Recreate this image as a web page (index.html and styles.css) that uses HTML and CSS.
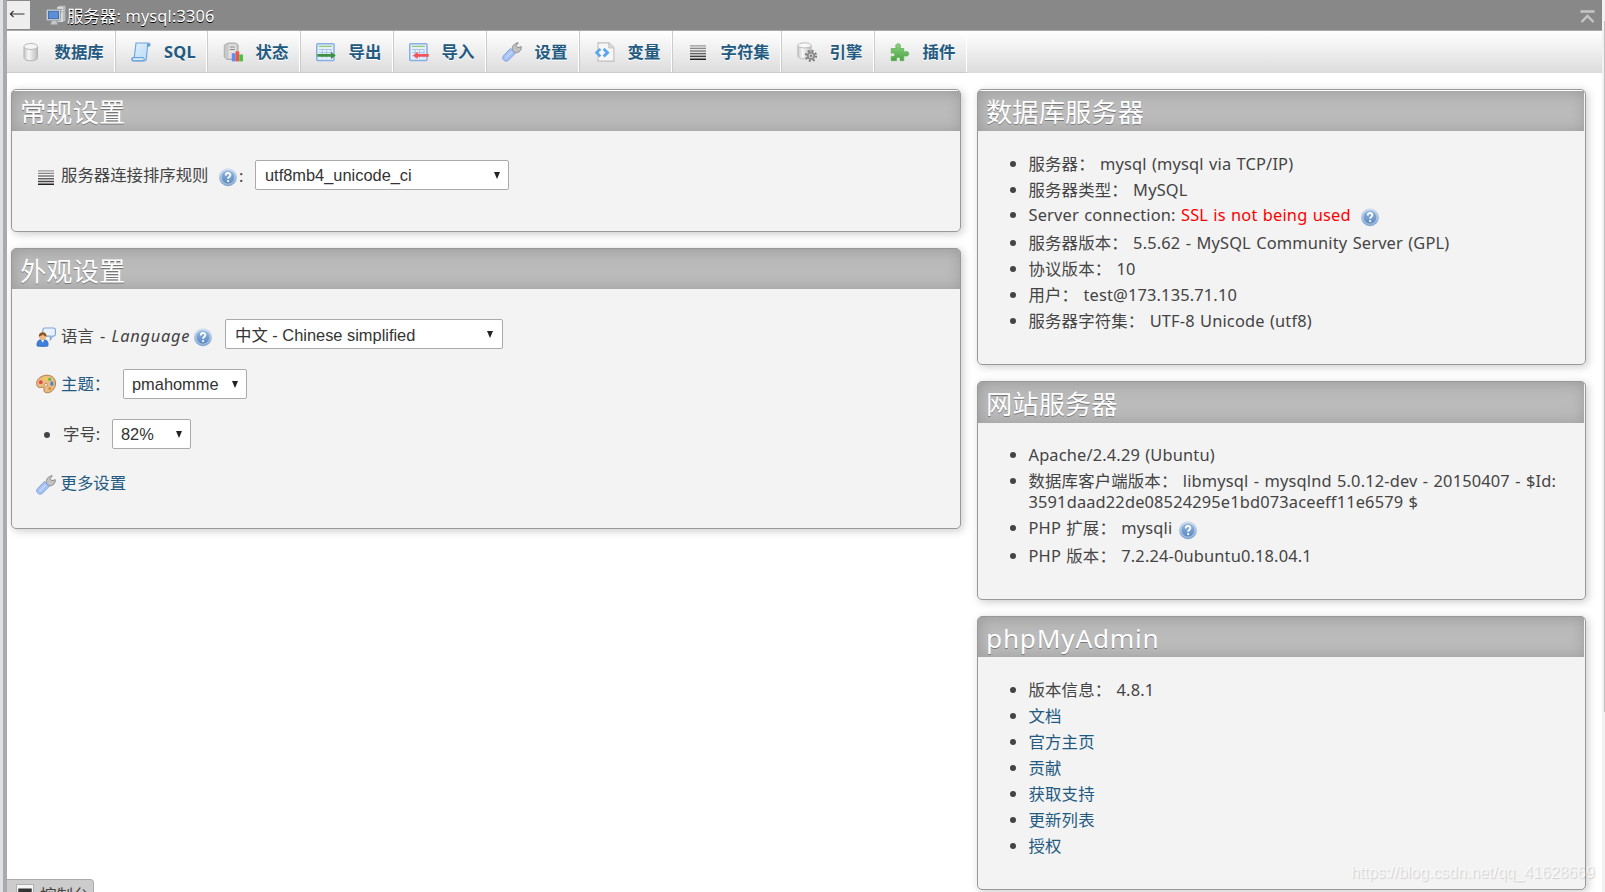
FILE: index.html
```
<!DOCTYPE html>
<html lang="zh-CN">
<head>
    <meta charset="UTF-8">
    <title>mysql:3306 | phpMyAdmin</title>
    <link rel="stylesheet" href="styles.css">
</head>
<body>

<svg class="defs" aria-hidden="true">
    <defs>
        <linearGradient id="g-cyl"><stop offset="0" stop-color="#c9c9c9"/><stop offset=".35" stop-color="#f6f6f6"/><stop offset="1" stop-color="#bdbdbd"/></linearGradient>
        <linearGradient id="g-blue" x1="0" y1="0" x2="1" y2="1"><stop offset="0" stop-color="#e4f2fd"/><stop offset="1" stop-color="#b4d8f8"/></linearGradient>
        <linearGradient id="g-help" x1="0" y1="0" x2="0" y2="1"><stop offset="0" stop-color="#8fb5e0"/><stop offset="1" stop-color="#5b88bf"/></linearGradient>
        <linearGradient id="g-ring" x1="0" y1="0" x2="0" y2="1"><stop offset="0" stop-color="#d3e0f0"/><stop offset="1" stop-color="#7fa3d0"/></linearGradient>
        <linearGradient id="g-green" x1="0" y1="0" x2="0" y2="1"><stop offset="0" stop-color="#8fd182"/><stop offset="1" stop-color="#4ba545"/></linearGradient>
        <symbol id="i-server" viewBox="0 0 16 16">
            <path d="M9 1.5l2-1h4.5v12l-2 1H9z" fill="#b9bcbc"/>
            <path d="M9 1.5h4.5v12H9z" fill="#d8dada"/>
            <path d="M10 3.5h3M10 5.5h3" stroke="#999" stroke-width=".8"/>
            <rect x=".5" y="3.5" width="11" height="9" rx="1" fill="#d3d6d8" stroke="#9aa0a4" stroke-width=".8"/>
            <rect x="2" y="5" width="8" height="6" fill="#5b8ed6" stroke="#39659f" stroke-width=".7"/>
            <path d="M5 12.5h3l1.5 3h-6z" fill="#c4c6c7"/>
        </symbol>
        <symbol id="i-db" viewBox="0 0 16 16">
            <path d="M1.6 3.6v8.8c0 1.7 2.4 2.6 5.4 2.6s5.4-.9 5.4-2.6V3.6" fill="url(#g-cyl)" stroke="#b3b3b3" stroke-width=".8"/>
            <ellipse cx="7" cy="3.6" rx="5.4" ry="2.4" fill="#f5f5f5" stroke="#b9b9b9" stroke-width=".8"/>
        </symbol>
        <symbol id="i-sql" viewBox="0 0 16 16">
            <path d="M4 .8h10.200c1.300 0 1.500 2.300.2 2.600h-1.200L12.300 13.500c-.2 1.200-.8 1.700-1.700 1.700H1.500c-1.200 0-1.200-2.700.2-2.700h.9L4 .8z" fill="url(#g-blue)" stroke="#6ba5da" stroke-width=".9"/>
            <path d="M2 12.500h8c.8 0 .5 2.200 0 2.500H1.500c-1-.3-.7-2.500.5-2.500z" fill="#d5eafb" stroke="#5c98d0" stroke-width=".8"/>
            <path d="M12.800 1.200l1.600.2.600 1.500-2 .4z" fill="#4d95dc"/>
        </symbol>
        <symbol id="i-status" viewBox="0 0 16 16">
            <path d="M1 2.500L4 .8h6l2 1.400v10L9.500 14H3L1 12z" fill="#c9c9c9" stroke="#a5a5a5" stroke-width=".7"/>
            <path d="M4.500 2h6v11h-6z" fill="#e2e2e2"/>
            <path d="M5.500 4h4M5.500 6h4" stroke="#888" stroke-width=".9"/>
            <path d="M7 9h3v6.500H7z" fill="#5b90ec"/>
            <path d="M10 7.500h3v8h-3z" fill="#f0554c"/>
            <path d="M13 10h3v5.500h-3z" fill="#45c447"/>
        </symbol>
        <symbol id="i-table" viewBox="0 0 16 16">
            <rect x=".6" y="1.400" width="13.800" height="13.400" rx=".8" fill="#e6f0fa" stroke="#86aee0" stroke-width="1.200"/>
            <path d="M2.200 3.500h10.500" stroke="#8fc974" stroke-width="1"/>
            <path d="M2.500 6h10M2.500 8.500h10M2.500 11h10M5 6v7M8.500 6v7M12 6v7" stroke="#a9c4e4" stroke-width=".8"/>
        </symbol>
        <symbol id="i-export" viewBox="0 0 16 16">
            <use href="#i-table"/>
            <path d="M1 9.500h11V7.800l3.800 2.900-3.800 2.900v-1.800H1z" fill="#3d9140"/>
        </symbol>
        <symbol id="i-import" viewBox="0 0 16 16">
            <use href="#i-table"/>
            <path d="M15.800 9.500H7V7.800l-3.800 2.900L7 13.600v-1.800h8.800z" fill="#f4535a"/>
        </symbol>
        <symbol id="i-wrench" viewBox="0 0 16 16">
            <path d="M8.200 6.500C7.800 3.500 9.800.8 13 .6L11.300 3l1.300 1.600 2.800-.9c.3 3-2 5.200-4.800 4.900L9.700 8z" fill="#c2c2c2" stroke="#8b8b8b" stroke-width=".8"/>
            <path d="M6.700 5.200l3.900 3.900-5.600 5.600C2.600 16.800-.9 13.300 1.200 10.900z" fill="#a6c2f3" stroke="#7d9ce0" stroke-width=".7"/>
            <path d="M3 12.800l5-5" stroke="#c4d7fa" stroke-width="1"/>
        </symbol>
        <symbol id="i-vars" viewBox="0 0 16 16">
            <path d="M2.400.7h8.800l3.900 3.800v10.800H2.400z" fill="#f6f6f6" stroke="#bfbfbf" stroke-width=".9"/>
            <path d="M11 .7v4h4" fill="#ddd" stroke="#bfbfbf" stroke-width=".7"/>
            <path d="M4.300 5.500L1.200 8.500l3.100 3M6.900 5.500l3.200 3-3.200 3" fill="none" stroke="#5aa5ee" stroke-width="2.200"/>
        </symbol>
        <symbol id="i-charset" viewBox="0 0 16 16">
            <path d="M1.600 3.100h12.800" stroke="#999"/>
            <path d="M1.600 5.100h12.800" stroke="#888" stroke-width="1.100"/>
            <path d="M1.600 7.200h12.800" stroke="#777" stroke-width="1.100"/>
            <path d="M1.600 9.300h12.800" stroke="#666" stroke-width="1.200"/>
            <path d="M1.600 11.500h12.800" stroke="#444" stroke-width="1.200"/>
            <path d="M1.600 13.800h12.800" stroke="#222" stroke-width="1.200"/>
        </symbol>
        <symbol id="i-engine" viewBox="0 0 16 16">
            <path d="M.7 2.700v8.500c0 1.500 2.200 2.300 5.300 2.300s5.300-.8 5.300-2.300V2.700" fill="url(#g-cyl)" stroke="#b5b5b5" stroke-width=".7"/>
            <ellipse cx="6" cy="2.700" rx="5.300" ry="2" fill="#f8f8f8" stroke="#b5b5b5" stroke-width=".7"/>
            <circle cx="11.200" cy="11" r="4.100" fill="none" stroke="#777" stroke-width="1.500" stroke-dasharray="1.600 1.620"/>
            <circle cx="11.200" cy="11" r="2.600" fill="#ddd" stroke="#8b8b8b" stroke-width="1.500"/>
            <circle cx="11.200" cy="11" r="1" fill="#777"/>
        </symbol>
        <symbol id="i-plugin" viewBox="0 0 16 16">
            <path d="M1 5.200h4.200c-1.200-1.800-.6-3.900 1.300-3.900s2.500 2.100 1.300 3.900H11v3c2-1.200 4-.6 4 1.200s-2 2.500-4 1.300v4.200H8c.6-2-.2-2.800-1.300-2.800s-2 .8-1.400 2.800H1v-3.500c2 .5 2.900-.2 2.900-1.300S3 8.300 1 9z" fill="url(#g-green)" stroke="#5bb053" stroke-width=".6"/>
        </symbol>
        <symbol id="i-help" viewBox="0 0 16 16">
            <circle cx="8" cy="8.200" r="7.200" fill="url(#g-ring)"/>
            <circle cx="8" cy="8.200" r="5.500" fill="url(#g-help)" stroke="#b9cfea" stroke-width=".6"/>
            <path d="M6.200 6.700c0-2.600 3.700-2.400 3.700-.3 0 1.300-1.800 1.400-1.800 2.900" fill="none" stroke="#fff" stroke-width="1.500"/>
            <circle cx="8.100" cy="11.200" r=".9" fill="#fff"/>
        </symbol>
        <symbol id="i-lang" viewBox="0 0 16 16">
            <path d="M7 .8h7c1 0 1.500.5 1.500 1.400v3.600c0 1-.6 1.500-1.500 1.500h-.8L11.500 10V7.300H7c-1 0-1.500-.6-1.500-1.500V2.200C5.500 1.300 6 .8 7 .8z" fill="#e9f2fc" stroke="#7ba4d8" stroke-width=".9"/>
            <path d="M.8 15.200c-.4-3.200 1-4.800 2.700-5h3.600c2 .3 3 2 2.500 5-2 .7-6.600.7-8.800 0z" fill="#3f80da" stroke="#2b62b5" stroke-width=".5"/>
            <path d="M4.200 10.300h2.300L5.400 12.500z" fill="#fff"/>
            <circle cx="5.300" cy="7.400" r="2.900" fill="#f0b987"/>
            <path d="M2.200 7.500c-.3-4.400 6.600-4.600 6.300.1-1.600-.2-2.300-.8-3-1.600-.8.900-1.700 1.400-3.300 1.500z" fill="#8a5522"/>
        </symbol>
        <symbol id="i-theme" viewBox="0 0 16 16">
            <path d="M8.500 1C13 .7 16 4 15.600 8c-.4 4.300-3.600 7-6.600 7-2.300 0-3-1.400-2.600-2.800.4-1.600-.4-2-1.800-1.500C2.400 11.400.4 10.200.5 7.500.6 4 4 1.200 8.500 1z" fill="#e9bc86" stroke="#b37a42" stroke-width=".8"/>
            <circle cx="3.800" cy="6.500" r="1.500" fill="#e8483c"/>
            <circle cx="7.500" cy="3.700" r="1.300" fill="#f5d13c"/>
            <rect x="9.800" y="3" width="2.300" height="2.600" rx="1" fill="#58b947"/>
            <rect x="11.500" y="6" width="2.400" height="3.400" rx="1" fill="#4a86cf"/>
            <circle cx="8" cy="8.700" r="1.200" fill="#fff" stroke="#b37a42" stroke-width=".6"/>
            <circle cx="11" cy="11.500" r="1.200" fill="#d88b3d"/>
        </symbol>
        <symbol id="i-console" viewBox="0 0 16 16">
            <rect x=".5" y=".5" width="15" height="14" fill="#f5f5f5" stroke="#aaa" stroke-width=".8"/>
            <rect x="2" y="4" width="12" height="9" fill="#333"/>
        </symbol>
    </defs>
</svg>

<div class="nav-edge"></div>
<div class="page">
    <header class="serverinfo">
        <a class="back" href="#"><svg width="16" height="10" viewBox="0 0 16 10"><path d="M1 5h14.500M4.500 2L1.300 5l3.200 3" fill="none" stroke="#333" stroke-width="1.100"/></svg></a>
        <svg class="icon"><use href="#i-server"/></svg>
        <span class="server-name">服务器: <span>mysql:3306</span></span>
        <svg class="collapse" width="17" height="16" viewBox="0 0 17 16"><path d="M1.500 2.500h14M2.500 13l6-6 6 6" fill="none" stroke="#c6c6c6" stroke-width="2.400"/></svg>
    </header>

    <ul class="topmenu">
        <li class="first"><svg class="icon"><use href="#i-db"/></svg><a href="#">数据库</a></li>
        <li class="sql"><svg class="icon"><use href="#i-sql"/></svg><a href="#">SQL</a></li>
        <li><svg class="icon"><use href="#i-status"/></svg><a href="#">状态</a></li>
        <li><svg class="icon"><use href="#i-export"/></svg><a href="#">导出</a></li>
        <li><svg class="icon"><use href="#i-import"/></svg><a href="#">导入</a></li>
        <li><svg class="icon"><use href="#i-wrench"/></svg><a href="#">设置</a></li>
        <li><svg class="icon"><use href="#i-vars"/></svg><a href="#">变量</a></li>
        <li class="wide"><svg class="icon"><use href="#i-charset"/></svg><a href="#">字符集</a></li>
        <li><svg class="icon"><use href="#i-engine"/></svg><a href="#">引擎</a></li>
        <li><svg class="icon"><use href="#i-plugin"/></svg><a href="#">插件</a></li>
    </ul>

    <main class="columns">
        <div class="column">
            <section class="group general">
                <h2>常规设置</h2>
                <div class="setting">
                    <svg class="icon low"><use href="#i-charset"/></svg>
                    <span class="label collation">服务器连接排序规则</span>
                    <svg class="icon low"><use href="#i-help"/></svg>
                    <span class="colon">:</span>
                    <div class="select collation-select">utf8mb4_unicode_ci</div>
                </div>
            </section>

            <section class="group appearance">
                <h2>外观设置</h2>
                <div class="setting">
                    <svg class="icon lower"><use href="#i-lang"/></svg>
                    <span class="label language">语言 - <em>Language</em></span>
                    <svg class="icon lower"><use href="#i-help"/></svg>
                    <div class="select lang-select">中文 - Chinese simplified</div>
                </div>
                <div class="setting">
                    <svg class="icon"><use href="#i-theme"/></svg>
                    <span class="label theme"><a href="#">主题：</a></span>
                    <div class="select theme-select">pmahomme</div>
                </div>
                <div class="setting">
                    <span class="dot"></span>
                    <span class="label size">字号:</span>
                    <div class="select size-select">82%</div>
                </div>
                <div class="setting more">
                    <svg class="icon"><use href="#i-wrench"/></svg>
                    <span class="label"><a href="#">更多设置</a></span>
                </div>
            </section>
        </div>

        <div class="column side">
            <section class="group database">
                <h2>数据库服务器</h2>
                <ul>
                    <li>服务器： mysql (mysql via TCP/IP)</li>
                    <li>服务器类型： MySQL</li>
                    <li class="has-help">Server connection: <span class="warn">SSL is not being used</span> <svg class="icon ssl"><use href="#i-help"/></svg></li>
                    <li>服务器版本： 5.5.62 - MySQL Community Server (GPL)</li>
                    <li>协议版本： 10</li>
                    <li>用户： test@173.135.71.10</li>
                    <li>服务器字符集： UTF-8 Unicode (utf8)</li>
                </ul>
            </section>

            <section class="group web">
                <h2>网站服务器</h2>
                <ul>
                    <li>Apache/2.4.29 (Ubuntu)</li>
                    <li>数据库客户端版本： libmysql - mysqlnd 5.0.12-dev - 20150407 - $Id: 3591daad22de08524295e1bd073aceeff11e6579 $</li>
                    <li class="has-help">PHP 扩展： mysqli <svg class="icon"><use href="#i-help"/></svg></li>
                    <li>PHP 版本： 7.2.24-0ubuntu0.18.04.1</li>
                </ul>
            </section>

            <section class="group pma">
                <h2>phpMyAdmin</h2>
                <ul>
                    <li>版本信息： 4.8.1</li>
                    <li><a href="#">文档</a></li>
                    <li><a href="#">官方主页</a></li>
                    <li><a href="#">贡献</a></li>
                    <li><a href="#">获取支持</a></li>
                    <li><a href="#">更新列表</a></li>
                    <li><a href="#">授权</a></li>
                </ul>
            </section>
        </div>
    </main>
</div>
<div class="scrollbar"><div class="thumb"></div></div>

<div class="console"><svg class="icon"><use href="#i-console"/></svg><span>控制台</span></div>
<div class="watermark">https://blog.csdn.net/qq_41628669</div>

</body>
</html>
```
FILE: styles.css
```
* {
    box-sizing: border-box;
}
body {
    margin: 0;
    height: 892px;
    display: flex;
    overflow: hidden;
    position: relative;
    background: #fff;
    color: #444;
    font-family: "Noto Sans", "Noto Sans CJK SC", sans-serif;
    font-size: 16.4px;
    line-height: 21px;
}
a {
    color: #235a81;
    text-decoration: none;
}
ul {
    margin: 0;
    padding: 0;
}
.defs {
    position: absolute;
    width: 0;
    height: 0;
}
.icon {
    width: 20px;
    height: 20px;
    flex: none;
}
.low {
    margin-top: 4px;
}
.lower {
    margin-top: 6px;
}

/* frame edges */
.nav-edge {
    width: 7px;
    background: #aaa;
    border-left: 3px solid #dce1e5;
    flex: none;
}
.page {
    flex: 1;
    min-width: 0;
}
.scrollbar {
    width: 3px;
    background: #f1f1f1;
    padding: 21px 0 0 2px;
    flex: none;
}
.thumb {
    height: 691px;
    background: #c1c1c1;
}

/* header */
.serverinfo {
    display: flex;
    align-items: center;
    height: 31px;
    background: #888;
    border-bottom: 1px solid #aaa;
    color: #fff;
    text-shadow: 0 1px 0 #000;
}
.back {
    width: 23px;
    height: 28px;
    margin-right: 16px;
    padding: 8px 0 0 2px;
    background: #eee;
    line-height: 0;
}
.server-name {
    margin: 0 0 0 1px;
    letter-spacing: 0.12px;
    white-space: nowrap;
}
.collapse {
    margin: 3px 6px 0 auto;
}

/* tabs */
.topmenu {
    display: flex;
    height: 42px;
    list-style: none;
    background: linear-gradient(#fff, #dcdcdc);
    font-weight: bold;
}
.topmenu li {
    display: flex;
    align-items: center;
    width: 93px;
    padding-left: 15px;
    border: solid #ccc;
    border-width: 0 0 1px 1px;
    box-shadow: inset -1px 0 #fff;
}
.topmenu li.first {
    width: 108px;
    border-left: 0;
}
.topmenu li.sql {
    width: 92px;
}
.topmenu li.wide {
    width: 109px;
}
.topmenu a {
    margin-left: 12.5px;
    text-shadow: 0 1px 0 #fff;
    white-space: nowrap;
}
.topmenu .sql a {
    margin-left: 13px;
    letter-spacing: 0.3px;
}

/* panels */
.columns {
    display: flex;
    gap: 16px;
    padding: 16px 16px 0 4px;
}
.column {
    width: 950px;
    display: flex;
    flex-direction: column;
    gap: 16px;
}
.side {
    width: 609px;
}
.group {
    border: 1px solid #999;
    border-radius: 5px;
    background: #f3f3f3;
    box-shadow: 2px 2px 8px #ccc;
    overflow: hidden;
}
.group h2 {
    margin: 0;
    height: 40px;
    padding: 2px 8px 0;
    background: #bbb;
    box-shadow: 1px 1px 15px #999 inset;
    color: #fff;
    font-size: 26.24px;
    font-weight: normal;
    letter-spacing: 0.1px;
    line-height: 38px;
    text-shadow: 0 1px 0 #777;
}
.general,
.database {
    padding-top: 1px;
    background: linear-gradient(#fff 1px, #f3f3f3 1px);
}
.general { height: 143px; }
.appearance { height: 281px; }
.database { height: 276px; }
.web { height: 219px; }
.pma { height: 274px; }
.side h2 {
    margin-right: 1px;
}
.appearance h2 {
    padding-top: 3px;
}
.web h2 {
    height: 41px;
    padding-top: 3px;
}
.pma h2 {
    letter-spacing: 0.75px;
}

/* settings rows */
.setting {
    display: flex;
    align-items: center;
    height: 50px;
    padding-left: 24px;
}
.general .setting {
    margin-top: 19px;
}
.appearance h2 + .setting {
    margin-top: 20px;
}
.label {
    margin: -1px 0 0 5px;
    white-space: nowrap;
}
.collation { width: 157px; }
.language {
    width: 132px;
    margin-top: 2px;
    word-spacing: 2px;
}
.language em {
    letter-spacing: 0.75px;
}
.theme { width: 62px; }
.size { width: 49px; }
.more .label {
    margin-top: -3px;
}
.more .icon {
    margin: 2px 0 0 -0.500px;
}
.colon {
    width: 17px;
    padding-left: 1px;
}
.dot {
    width: 6px;
    height: 6px;
    margin: 2px 8px 0;
    border-radius: 50%;
    background: #444;
}
.select {
    display: flex;
    align-items: center;
    height: 30px;
    padding: 0 8px 0 9px;
    border: 1px solid #aaa;
    border-radius: 2px;
    background: #fff;
    color: #333;
    font-family: "Liberation Sans", "Noto Sans CJK SC", sans-serif;
    white-space: nowrap;
}
.select::after {
    content: "";
    margin-left: auto;
    border: solid transparent;
    border-width: 7px 3.5px 0;
    border-top-color: #222;
}
.collation-select { width: 254px; }
.lang-select {
    width: 278px;
    margin-left: 12px;
    padding: 3px 9px 0;
}
.lang-select::after {
    margin-top: -3px;
}
.theme-select {
    width: 124px;
    padding-left: 8px;
}
.size-select {
    width: 79px;
    padding-left: 8px;
}

/* info lists */
.side ul {
    margin: 22px 20px 0 50.500px;
    letter-spacing: 0.16px;
    word-spacing: 0.9px;
}
.side .web ul {
    margin-top: 21px;
}
.side li {
    margin-bottom: 5px;
}
.side .has-help {
    height: 22px;
    line-height: 19px;
}
.web .has-help {
    height: 23px;
    line-height: 21px;
}
.has-help .icon {
    vertical-align: top;
    margin-top: 2px;
}
.web .has-help .icon {
    margin-top: 3px;
}
.has-help .ssl {
    margin-left: 4px;
}
.warn {
    color: #f00;
}

.console {
    position: absolute;
    left: 7px;
    top: 879px;
    display: flex;
    width: 87px;
    height: 30px;
    padding: 4px 0 0 9px;
    background: #ccc;
    border: 1px solid #aaa;
    border-left: 0;
    border-radius: 0 4px 0 0;
    white-space: nowrap;
}
.console .icon {
    width: 18px;
    height: 18px;
}
.console span {
    margin: 0 0 0 6px;
}
.watermark {
    position: absolute;
    left: 1351px;
    top: 862px;
    font-family: "Liberation Sans", sans-serif;
    font-size: 15.9px;
    color: rgba(255, 255, 255, 0.7);
    text-shadow: 1px 1px 1px rgba(0, 0, 0, 0.15);
}
```
